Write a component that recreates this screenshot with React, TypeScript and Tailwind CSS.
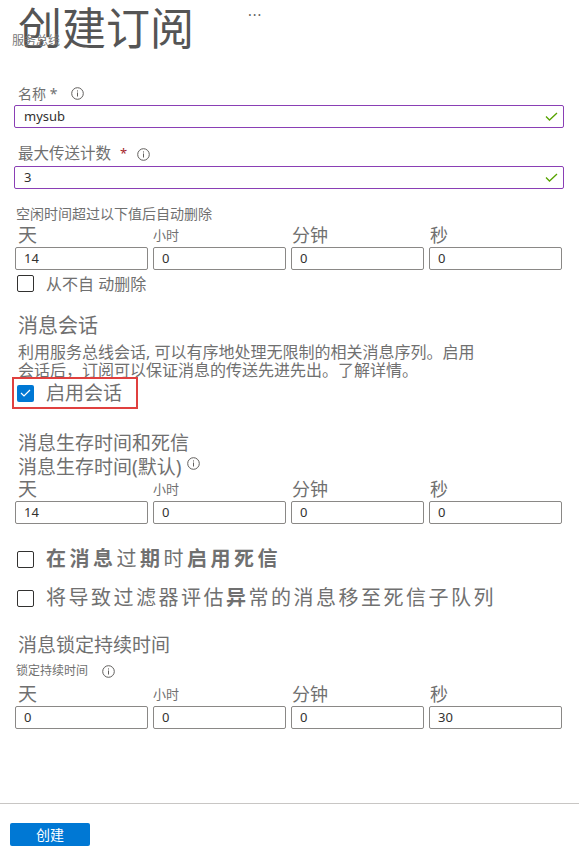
import type { ReactNode } from "react";

const font = "font-['Noto_Sans','Noto_Sans_CJK_SC',sans-serif]";

function Info({ className = "" }: { className?: string }) {
  return (
    <svg width="13" height="13" viewBox="0 0 13 13" className={className}>
      <circle cx="6.5" cy="6.5" r="5.8" fill="none" stroke="#605e5c" strokeWidth="1" />
      <rect x="6" y="5.5" width="1" height="4" fill="#605e5c" />
      <rect x="6" y="3.4" width="1" height="1.1" fill="#605e5c" />
    </svg>
  );
}

function Check() {
  return (
    <svg width="13" height="9" viewBox="0 0 13 9">
      <path d="M1 4.5 L4.5 8 L12 1" fill="none" stroke="#57a300" strokeWidth="1.3" />
    </svg>
  );
}

function Checkbox({ checked = false }: { checked?: boolean }) {
  if (checked) {
    return (
      <span className="flex h-[17px] w-[17px] shrink-0 items-center justify-center rounded-[2px] bg-[#0078d4]">
        <svg width="11" height="8" viewBox="0 0 11 8">
          <path d="M1 4 L4 7 L10 1" fill="none" stroke="#ffffff" strokeWidth="1.2" />
        </svg>
      </span>
    );
  }
  return <span className="h-[17px] w-[17px] shrink-0 rounded-[2px] border border-[#323130] bg-white" />;
}

function ValidInput({ value }: { value: string }) {
  return (
    <div className="ml-[14px] flex h-[23px] w-[550px] items-center justify-between rounded-[2px] border border-[#8a3fb5] pl-[9px] pr-[5px] text-[13px] text-[#323130]">
      <span>{value}</span>
      <Check />
    </div>
  );
}

function TimeRow({ values }: { values: string[] }) {
  return (
    <div className="pl-[15px]">
      <div className="grid h-[20px] grid-cols-[133px_133px_133px_133px] items-end gap-x-[5px] text-[#707070]">
        <span className="pl-[3px] text-[19px] leading-[20px]">天</span>
        <span className="pb-[2px] text-[13px] leading-[16px]">小时</span>
        <span className="pl-[1px] text-[18px] leading-[20px]">分钟</span>
        <span className="pl-[1px] text-[18px] leading-[20px]">秒</span>
      </div>
      <div className="mt-[2px] grid grid-cols-[133px_133px_133px_133px] gap-x-[5px]">
        {values.map((v, i) => (
          <div
            key={i}
            className="flex h-[23px] items-center rounded-[2px] border border-[#8a8886] pl-[8px] text-[13px] text-[#323130]"
          >
            {v}
          </div>
        ))}
      </div>
    </div>
  );
}

function CheckRow({ children, className = "" }: { children: ReactNode; className?: string }) {
  return <div className={`flex items-center gap-[12px] pl-[17px] ${className}`}>{children}</div>;
}

export default function App() {
  return (
    <div className={`relative h-[856px] w-[579px] overflow-hidden bg-white ${font}`}>
      {/* Header */}
      <div className="relative flex h-[60px] items-start pl-[18px]">
        <h1 className="mt-[2px] text-[44px] leading-[52px] text-[#555555]">创建订阅</h1>
        <span className="ml-[54px] mt-[4px] text-[14px] tracking-[1px] text-[#605e5c]">···</span>
        <span className="absolute left-[12px] top-[33px] text-[12px] leading-[16px] text-[#777777]">服务总线</span>
      </div>

      {/* Name */}
      <div className="mt-[23px] flex h-[20px] items-center gap-[2px] pl-[18px] text-[14px] text-[#707070]">
        <span>名称 *</span>
        <Info className="ml-[12px]" />
      </div>
      <div className="mt-[2px]">
        <ValidInput value="mysub" />
      </div>

      {/* Max delivery */}
      <div className="mt-[16px] flex h-[20px] items-center pl-[18px] text-[15.5px] text-[#707070]">
        <span>最大传送计数</span>
        <span className="ml-[9px] text-[13px] text-[#a4262c]">*</span>
        <Info className="ml-[10px]" />
      </div>
      <div className="mt-[2px]">
        <ValidInput value="3" />
      </div>

      {/* Auto delete */}
      <div className="mt-[14px] flex h-[20px] items-center pl-[16px] text-[14px] text-[#707070]">
        空闲时间超过以下值后自动删除
      </div>
      <div className="mt-[2px]">
        <TimeRow values={["14", "0", "0", "0"]} />
      </div>
      <CheckRow className="mt-[5px] h-[17px]">
        <Checkbox />
        <span className="text-[16px] text-[#707070]">从不自 动删除</span>
      </CheckRow>

      {/* Sessions */}
      <div className="mt-[22px] flex h-[24px] items-center pl-[18px] text-[20px] leading-[24px] text-[#707070]">消息会话</div>
      <p className="mt-[5px] w-[490px] pl-[18px] text-[16px] leading-[18px] text-[#707070]">
        利用服务总线会话, 可以有序地处理无限制的相关消息序列。启用会话后，订阅可以保证消息的传送先进先出。了解详情。
      </p>
      <div className="relative ml-[12px] mt-[-2px] flex h-[32px] w-[126px] items-center gap-[12px] border-2 border-[#e0403f] pl-[3px]">
        <Checkbox checked />
        <span className="text-[19px] leading-[24px] text-[#707070]">启用会话</span>
      </div>

      {/* TTL */}
      <div className="mt-[22px] flex h-[24px] items-center pl-[18px] text-[19px] leading-[24px] text-[#707070]">消息生存时间和死信</div>
      <div className="mt-[1px] flex h-[22px] items-center pl-[18px] text-[19px] leading-[22px] text-[#707070]">
        <span>消息生存时间(默认)</span>
        <Info className="ml-[6px] -mt-[8px]" />
      </div>
      <div className="mt-[1px]">
        <TimeRow values={["14", "0", "0", "0"]} />
      </div>

      <CheckRow className="mt-[23px] h-[24px]">
        <Checkbox />
        <span className="text-[20px] leading-[24px] tracking-[3.5px] text-[#707070]">
          <b>在消息</b>过<b>期</b>时<b>启用死信</b>
        </span>
      </CheckRow>
      <CheckRow className="mt-[15px] h-[24px]">
        <Checkbox />
        <span className="text-[20px] leading-[24px] tracking-[2.5px] text-[#707070]">
          将导致过滤器评估<b>异</b>常的消息移至死信子队列
        </span>
      </CheckRow>

      {/* Lock duration */}
      <div className="mt-[23px] flex h-[24px] items-center pl-[18px] text-[19px] leading-[24px] text-[#707070]">消息锁定持续时间</div>
      <div className="mt-[5px] flex h-[18px] items-center pl-[16px] text-[12px] leading-[18px] text-[#707070]">
        <span>锁定持续时间</span>
        <Info className="ml-[14px]" />
      </div>
      <div className="mt-[4px]">
        <TimeRow values={["0", "0", "0", "30"]} />
      </div>

      {/* Footer */}
      <div className="mt-[74px] border-t border-[#c8c6c4]" />
      <button className="ml-[10px] mt-[19px] flex h-[23px] w-[80px] items-center justify-center rounded-[2px] bg-[#0078d4] text-[14px] text-white">
        创建
      </button>
    </div>
  );
}
